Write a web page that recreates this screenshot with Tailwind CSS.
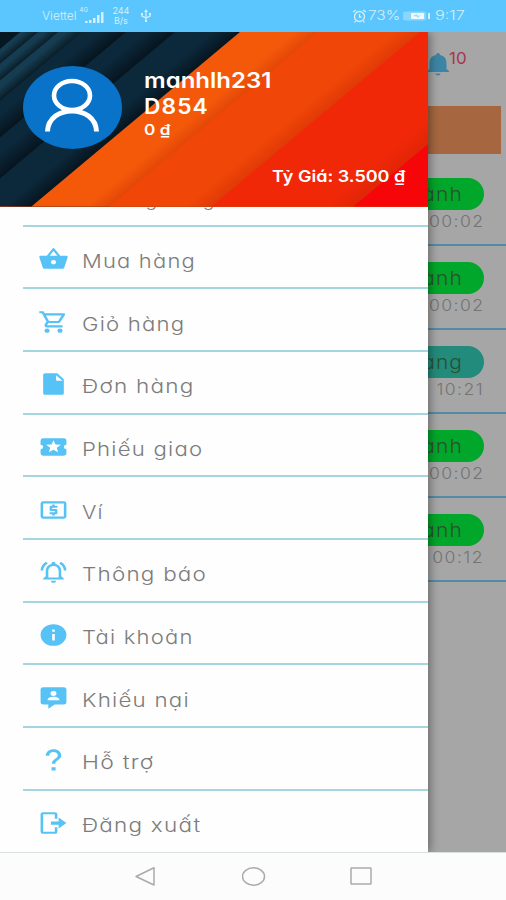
<!DOCTYPE html>
<html lang="vi">
<head>
<meta charset="utf-8">
<meta name="viewport" content="width=device-width, initial-scale=1">
<title>Menu</title>
<script src="https://cdn.jsdelivr.net/npm/@tailwindcss/browser@4"></script>
</head>
<body class="bg-white">
<div class="relative flex h-[900px] w-[506px] flex-col overflow-hidden font-['Inter','Noto_Sans',sans-serif] [font-feature-settings:'cv11']">

  <!-- status bar -->
  <div class="flex h-8 shrink-0 items-center justify-between bg-[#5bc6fd] pr-[41px] pl-[42px] text-[#d5eff9]">
    <div class="flex items-center">
      <span data-w="35" class="inline-block origin-left text-[11px] font-light whitespace-nowrap">Viettel</span>
      <span class="ml-[3px] self-start text-[6px] leading-[8px]">4G</span>
      <svg class="-ml-[3px] mt-px h-3 w-[19px]" viewBox="0 0 19 12" fill="currentColor"><path d="M0 10h2.500v2H0zM4 9h2.500v3H4zM8 7h2.500v5H8zM12 4h2.500v8H12zM16 1h2.500v11H16z"/></svg>
      <div class="ml-2 flex w-[18px] flex-col items-center text-[9px] leading-[10px] whitespace-nowrap"><span>244</span><span>B/s</span></div>
      <svg class="ml-2.5 h-3.5 w-3" viewBox="0 0 12 14" fill="none" stroke="currentColor" stroke-width="1.3"><path d="M6 2v9M2 5v2l4 2 4-2V5"/><path d="M6 0l2 3H4zM1 4h2v2H1zM9 4h2v2H9zM5 11h2v2H5z" fill="currentColor" stroke="none"/></svg>
    </div>
    <div class="flex items-center">
      <svg class="h-3.5 w-[15px]" viewBox="0 0 15 14" fill="none" stroke="currentColor" stroke-width="1.3"><circle cx="7.5" cy="7.5" r="5"/><path d="M7.500 5v3h2M1 3l3-2M14 3l-3-2M3.500 12l-1 1.500M11.500 12l1 1.500"/></svg>
      <span data-w="32" class="ml-[1px] inline-block origin-left text-[13px] font-light whitespace-nowrap">73%</span>
      <svg class="ml-[3px] h-[10px] w-[28px]" viewBox="0 0 28 10" fill="currentColor"><rect x="0" y=".5" width="23" height="9" rx="2" opacity=".4"/><rect x="8" y="2" width="13" height="6" rx="1" fill="#eefaff"/><path d="M10 5l4-2v1.500h4L14 7V5.500z" fill="#9fdcfb"/><path d="M25 2h2v6h-2z"/></svg>
      <span data-w="30" class="ml-[4px] inline-block origin-left text-[13px] font-light whitespace-nowrap">9:17</span>
    </div>
  </div>

  <div class="relative flex h-[820px] shrink-0 justify-end overflow-hidden bg-[#a6a6a6]">
    <!-- order list behind the drawer -->
    <div class="flex w-[78px] flex-col overflow-hidden">
      <div class="flex h-[74px] shrink-0 pt-[16px]">
        <svg class="mt-[5px] h-[23px] w-[21px] shrink-0" viewBox="0 0 21 23" fill="#3d85a5"><path d="M8 2a2 2 0 0 1 4 0c5 1 6.500 4 6.500 9v5l2.500 2v1H-1v-1l2.500-2v-5c0-5 1.500-8 6.500-9zM7.500 20.500h5a2.500 2 0 0 1-5 0z"/></svg>
        <span data-w="18" class="inline-block origin-left self-start text-[16px] leading-5 text-[#a4374c]">10</span>
      </div>
      <div class="mr-[5px] h-12 shrink-0 bg-[#a66740]"></div>
      <div id="orders" class="flex flex-col pt-2"></div>
    </div>

    <!-- drawer -->
    <div class="absolute top-0 left-0 flex h-[820px] w-[428px] flex-col overflow-y-clip bg-[#fefefe] shadow-[2px_0_9px_rgba(0,0,0,0.38)]">
      <header class="relative z-10 h-[174.500px] shrink-0 overflow-hidden bg-[#ee4407]">
        <svg class="absolute inset-0 h-full w-full" viewBox="0 0 428 175" preserveAspectRatio="none">
          <defs>
            <linearGradient id="s" x1="0" y1="0" x2="1" y2="0"><stop offset="0" stop-color="#000" stop-opacity="0"/><stop offset="1" stop-color="#000" stop-opacity=".5"/></linearGradient>
            <linearGradient id="r" x1="0" y1="0" x2="1" y2="0"><stop offset="0" stop-color="#c02000" stop-opacity="0"/><stop offset="1" stop-color="#c02000" stop-opacity=".32"/></linearGradient>
          </defs>
          <rect width="428" height="175" fill="#0c293c"/>
          <path d="M0 0h82L0 68z" fill="#153c50"/>
          <path d="M0 0h20L0 17z" fill="#071722"/>
          <g transform="skewX(-50)" fill="url(#s)">
            <rect x="25" width="13" height="175"/><rect x="45" width="13" height="175"/><rect x="66" width="16" height="175"/><rect x="98" width="28" height="175"/><rect x="144" width="31" height="175"/><rect x="212" width="28" height="175"/>
          </g>
          <g transform="skewX(-50)">
            <rect x="240" width="500" height="175" fill="#f4590a"/>
            <rect x="318" width="500" height="175" fill="#f04608"/>
            <rect x="420" width="500" height="175" fill="#f02808"/>
            <rect x="562" width="300" height="175" fill="#f60609"/>
            <rect x="294" width="24" height="175" fill="url(#r)"/>
            <rect x="394" width="26" height="175" fill="url(#r)"/>
            <rect x="532" width="30" height="175" fill="url(#r)"/>
          </g>
        </svg>
        <div class="relative flex pt-[34px] pl-[23px]">
          <svg class="h-[83px] w-[99px] shrink-0" viewBox="0 0 99 83"><ellipse cx="49.500" cy="41.500" rx="49.500" ry="41.500" fill="#0873c8"/><g fill="none" stroke="#fff" stroke-width="4.600"><ellipse cx="49" cy="29.500" rx="18" ry="14.500"/><path d="M24.500 65.500C25.500 38 72.500 38 73.500 65.500" stroke-width="5"/></g></svg>
          <div class="ml-[22px] flex flex-col items-start pt-[2px] whitespace-nowrap text-white">
            <span data-w="127" class="inline-block origin-left text-[21px] leading-[26px] font-semibold">manhlh231</span>
            <span data-w="65" class="inline-block origin-left text-[21px] leading-[26px] font-semibold tracking-[1px]">D854</span>
            <span data-w="27" class="inline-block origin-left text-[14px] leading-[20px] font-semibold">0 ₫</span>
          </div>
        </div>
        <div class="relative mt-[14.500px] pl-[272px] whitespace-nowrap text-white"><span data-w="133" class="inline-block origin-left text-[16px] leading-[24px] font-semibold">Tỷ Giá: 3.500 ₫</span></div>
      </header>
      <nav id="menu" class="-mt-[42.300px] flex flex-col pl-[23px]"></nav>
    </div>
  </div>

  <!-- system navigation -->
  <div class="relative flex h-12 shrink-0 items-center gap-[86px] border-t border-[#dadfe0] bg-[#fcfcfc] pl-[134px] text-[#aaa]">
    <svg class="h-5 w-[22px]" viewBox="0 0 22 20" fill="none" stroke="currentColor" stroke-width="1.500" stroke-linejoin="round"><path d="M2 9.500L20 .8v17.200z"/></svg>
    <svg class="h-5 w-6" viewBox="0 0 24 20" fill="none" stroke="currentColor" stroke-width="1.500"><ellipse cx="11.500" cy="9.500" rx="11" ry="8.700"/></svg>
    <svg class="-ml-[2px] h-5 w-[22px]" viewBox="0 0 22 20" fill="none" stroke="currentColor" stroke-width="1.500"><rect x="1" y="1" width="20" height="16" rx=".5"/></svg>
  </div>
</div>

<script>
const items = [
  ['Thường dùng', 134, ''],
  ['Mua hàng', 114, '<path d="M17.210 9l-4.380-6.560a1 1 0 0 0-1.660 0L6.790 9H2c-.55 0-1 .45-1 1l.04.27 2.540 9.270C3.810 20.380 4.580 21 5.500 21h13c.92 0 1.690-.62 1.930-1.460l2.540-9.270L23 10c0-.55-.45-1-1-1zM9 9l3-4.400L15 9zm3 8a2 2 0 1 1 0-4 2 2 0 0 1 0 4z"/>'],
  ['Giỏ hàng', 103, '<path d="M15.550 13c.75 0 1.410-.41 1.750-1.030l3.580-6.490A.996.996 0 0 0 20.010 4H5.210l-.94-2H1v2h2l3.600 7.590-1.350 2.440C4.520 15.370 5.480 17 7 17h12v-2H7l1.100-2h7.450zM6.160 6h12.150l-2.760 5H8.530L6.160 6zM7 18a2 2 0 1 0 0 4 2 2 0 0 0 0-4zm10 0a2 2 0 1 0 0 4 2 2 0 0 0 0-4z"/>'],
  ['Đơn hàng', 112, '<path d="M15 2H5.500C4.670 2 4 2.700 4 3.500v17c0 .8.670 1.500 1.500 1.500h13c.83 0 1.500-.7 1.500-1.500V7.500zM14 4l5 5h-4c-.6 0-1-.4-1-1z"/>'],
  ['Phiếu giao', 121, '<path d="M20 12a2 2 0 0 1 2-2V6a2 2 0 0 0-2-2H4a2 2 0 0 0-2 2v4a2 2 0 0 1 0 4v4a2 2 0 0 0 2 2h16a2 2 0 0 0 2-2v-4a2 2 0 0 1-2-2zm-4.420 4.800L12 14.500l-3.580 2.300 1.080-4.120-3.290-2.690 4.240-.25L12 5.800l1.540 3.950 4.240.25-3.290 2.690z"/>'],
  ['Ví', 22, '<path d="M11 17h2v-1h1a1 1 0 0 0 1-1v-3a1 1 0 0 0-1-1h-3v-1h4V8h-2V7h-2v1h-1a1 1 0 0 0-1 1v3a1 1 0 0 0 1 1h3v1H9v2h2zM20 4H4a2 2 0 0 0-2 2v12a2 2 0 0 0 2 2h16a2 2 0 0 0 2-2V6a2 2 0 0 0-2-2zm0 14H4V6h16z"/>'],
  ['Thông báo', 125, '<path d="M12 22a2 2 0 0 0 2-2h-4a2 2 0 0 0 2 2zm6-6v-5c0-3.070-1.630-5.640-4.500-6.320V4a1.500 1.500 0 0 0-3 0v.68C7.640 5.360 6 7.920 6 11v5l-2 2v1h16v-1zm-2 1H8v-6c0-2.480 1.510-4.500 4-4.500s4 2.020 4 4.500zM7.580 4.080L6.150 2.650A10.460 10.460 0 0 0 2 10.500h2a8.500 8.500 0 0 1 3.580-6.420zM20 10.500h2a10.500 10.500 0 0 0-4.150-7.850l-1.430 1.430A8.500 8.500 0 0 1 20 10.500z"/>'],
  ['Tài khoản', 112, '<path d="M12 2a10 10 0 1 0 0 20 10 10 0 0 0 0-20zm1 15h-2v-6h2zm0-8h-2V7h2z"/>'],
  ['Khiếu nại', 107.5, '<path d="M20 2H4a2 2 0 0 0-2 2v12a2 2 0 0 0 2 2h4v4l5-4h7a2 2 0 0 0 2-2V4a2 2 0 0 0-2-2zm-8 3.500a2.300 2.300 0 1 1 0 4.600 2.300 2.300 0 0 1 0-4.600zM16.500 14h-9v-.9c0-1.500 3-2.300 4.500-2.300s4.500.8 4.500 2.300z"/>'],
  ['Hỗ trợ', 73, '<path d="M6 8h2.700a3.300 3.300 0 0 1 6.600 0c0 2.700-4.600 3-4.600 7.500h2.700c0-3.200 4.600-3.700 4.600-7.600C18 4.300 15.500 2 12.100 2S6 4.500 6 8zM10.500 18.700h3.100v3h-3.100z"/>'],
  ['Đăng xuất', 119, '<path d="M4 2a2 2 0 0 0-2 2v16a2 2 0 0 0 2 2h9a2 2 0 0 0 2-2v-4h-2v4H4V4h9v4h2V4a2 2 0 0 0-2-2zM16 7v3.500H10v3h6V17l6-5z"/>']
];
document.getElementById('menu').innerHTML = items.map(([t, w, p]) => `
  <div class="flex h-[62.650px] shrink-0 items-center border-b-2 border-[#a5d5df] last:border-transparent">
    <svg class="mt-[4px] ml-[14.500px] h-[26px] w-[31px] shrink-0" viewBox="0 0 24 24" preserveAspectRatio="none" fill="#56c2f5" fill-rule="evenodd">${p}</svg>
    <span data-w="${w}" class="mt-[8px] ml-[13px] inline-block origin-left text-[18.500px] leading-6 font-light tracking-[1px] whitespace-nowrap text-[#7c7c7c]">${t}</span>
  </div>`).join('');

const orders = [['ành', '00:02', 0], ['ành', '00:02', 0], ['àng', '9 10:21', 1], ['ành', '00:02', 0], ['ành', '00:12', 0]];
document.getElementById('orders').innerHTML = orders.map(([s, t, alt]) => `
  <div class="flex h-[84px] w-[78px] shrink-0 flex-col items-end border-b-2 border-[#548ba4] pt-[15.500px]">
    <div class="mr-[22px] flex h-8 w-[90px] items-center justify-end rounded-full pt-[3px] pr-[21px] text-[19px] font-light tracking-[1px] text-[#28522f] ${alt ? 'bg-[#228b7b]' : 'bg-[#00a72a]'}"><span class="inline-block origin-right scale-x-110">${s}</span></div>
    <span class="mr-[22px] inline-block origin-right text-[16px] leading-[22px] font-light tracking-[1.300px] whitespace-nowrap text-[#747474] scale-x-110">${t}</span>
  </div>`).join('');

// Stretch each label to its data-w width, again whenever its natural width changes
const fit = e => {
  const w = e.offsetWidth;
  if (!w) return;
  e.style.transform = `scaleX(${e.dataset.w / w})`;
  e.style.marginRight = `${e.dataset.w - w}px`;
};
const watcher = new ResizeObserver(list => list.forEach(x => fit(x.target)));
document.querySelectorAll('[data-w]').forEach(e => { fit(e); watcher.observe(e); });
</script>
</body>
</html>
